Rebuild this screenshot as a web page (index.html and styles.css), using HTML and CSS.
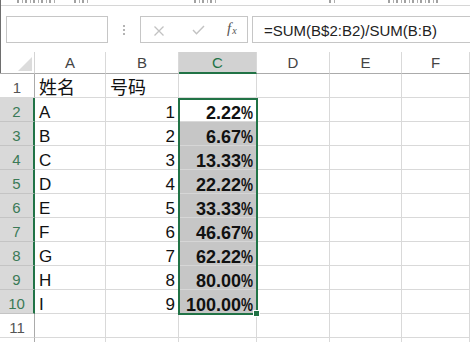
FILE: index.html
```html
<!DOCTYPE html>
<html lang="zh-CN">
<head>
<meta charset="utf-8">
<title>Sheet</title>
<link rel="stylesheet" href="styles.css">
</head>
<body>
<div class="top">
  <div class="ribbon">
    <span class="frag f1"></span>
    <span class="frag f2"></span>
    <span class="frag f3"></span>
    <span class="frag f4"></span>
    <span class="frag f5"></span>
  </div>
  <div class="fbar">
    <div class="namebox"></div>
    <div class="grip"><i></i><i></i><i></i></div>
    <div class="fbtns">
      <svg class="ico x" width="12" height="10" viewBox="0 0 12 10"><path d="M1.5 0.5 L10.5 9.5 M10.5 0.5 L1.5 9.5" stroke="#c2c2c2" stroke-width="1.3" fill="none"/></svg>
      <svg class="ico ok" width="13" height="10" viewBox="0 0 13 10"><path d="M1 5 L4.5 8.8 L12 1" stroke="#c2c2c2" stroke-width="1.4" fill="none"/></svg>
      <span class="fx">f<sub>x</sub></span>
    </div>
    <div class="finput">=SUM(B$2:B2)/SUM(B:B)</div>
  </div>
</div>
<div class="sheet">
  <div class="corner"><svg width="16" height="16" viewBox="0 0 16 16"><polygon points="15,1 15,15 1,15" fill="#dcdcdc"/></svg></div>
  <div class="hc">A</div><div class="hc">B</div><div class="hc sel">C</div><div class="hc">D</div><div class="hc">E</div><div class="hc">F</div>

  <div class="rh">1</div><div class="c cjk">姓名</div><div class="c cjk">号码</div><div class="c"></div><div class="c"></div><div class="c"></div><div class="c"></div>

  <div class="rh sel">2</div><div class="c">A</div><div class="c r">1</div><div class="c r pct">2.22<i>%</i></div><div class="c"></div><div class="c"></div><div class="c"></div>
  <div class="rh sel">3</div><div class="c">B</div><div class="c r">2</div><div class="c r pct fill">6.67<i>%</i></div><div class="c"></div><div class="c"></div><div class="c"></div>
  <div class="rh sel">4</div><div class="c">C</div><div class="c r">3</div><div class="c r pct fill">13.33<i>%</i></div><div class="c"></div><div class="c"></div><div class="c"></div>
  <div class="rh sel">5</div><div class="c">D</div><div class="c r">4</div><div class="c r pct fill">22.22<i>%</i></div><div class="c"></div><div class="c"></div><div class="c"></div>
  <div class="rh sel">6</div><div class="c">E</div><div class="c r">5</div><div class="c r pct fill">33.33<i>%</i></div><div class="c"></div><div class="c"></div><div class="c"></div>
  <div class="rh sel">7</div><div class="c">F</div><div class="c r">6</div><div class="c r pct fill">46.67<i>%</i></div><div class="c"></div><div class="c"></div><div class="c"></div>
  <div class="rh sel">8</div><div class="c">G</div><div class="c r">7</div><div class="c r pct fill">62.22<i>%</i></div><div class="c"></div><div class="c"></div><div class="c"></div>
  <div class="rh sel">9</div><div class="c">H</div><div class="c r">8</div><div class="c r pct fill">80.00<i>%</i></div><div class="c"></div><div class="c"></div><div class="c"></div>
  <div class="rh sel">10</div><div class="c">I</div><div class="c r">9</div><div class="c r pct fill">100.00<i>%</i></div><div class="c"></div><div class="c"></div><div class="c"></div>

  <div class="rh">11</div><div class="c"></div><div class="c"></div><div class="c"></div><div class="c"></div><div class="c"></div><div class="c"></div>
  <div class="rh"></div><div class="c"></div><div class="c"></div><div class="c"></div><div class="c"></div><div class="c"></div><div class="c"></div>

  <div class="selbox"><span class="handle"></span></div>
</div>
</body>
</html>
```
FILE: styles.css
```css
* { box-sizing: border-box; }
html, body { margin: 0; padding: 0; background: #fff; }
body {
  width: 470px;
  height: 342px;
  overflow: hidden;
  font-family: "Liberation Sans", Arial, sans-serif;
  color: #111;
}

.top { border-left: 1px solid #6e6e6e; }

.ribbon {
  height: 6px;
  border-bottom: 1px solid #d6d6d6;
  display: flex;
  align-items: flex-start;
  overflow: hidden;
}
.frag {
  display: block;
  height: 3px;
  background: repeating-linear-gradient(90deg, #8a8a8a 0 2px, transparent 2px 5px, #9a9a9a 5px 6px, transparent 6px 8px);
  opacity: 0.8;
}
.f1 { margin-left: 16px; width: 39px; }
.f2 { margin-left: 18px; width: 14px; }
.f3 { margin-left: 106px; width: 22px; }
.f4 { margin-left: 113px; width: 6px; }
.f5 { margin-left: 53px; width: 50px; }

.fbar {
  display: flex;
  align-items: center;
  height: 46px;
  padding: 10px 0 9px 5px;
}
.namebox {
  width: 102px;
  height: 27px;
  border: 1px solid #c6c6c6;
}
.grip {
  width: 32px;
  display: flex;
  flex-direction: column;
  align-items: center;
  gap: 2px;
}
.grip i {
  display: block;
  width: 2px;
  height: 2px;
  background: #b4b4b4;
}
.fbtns {
  width: 108px;
  height: 27px;
  border: 1px solid #c6c6c6;
  display: flex;
  align-items: center;
  padding-left: 12px;
}
.ico { display: block; }
.ico.x { margin-top: 2px; }
.ico.ok { margin-left: 27px; margin-top: 1px; }
.fx {
  margin-left: 22px;
  font-family: "Liberation Serif", "Times New Roman", serif;
  font-style: italic;
  font-size: 15px;
  color: #555;
  line-height: 14px;
}
.fx sub { font-size: 10px; vertical-align: -1px; margin-left: 1px; }
.finput {
  flex: 1;
  margin-left: 4px;
  height: 27px;
  border: 1px solid #c6c6c6;
  border-right: none;
  padding: 1px 0 0 11px;
  font-size: 15px;
  line-height: 25px;
  color: #222;
  white-space: nowrap;
}

.sheet {
  position: relative;
  display: grid;
  grid-template-columns: 35px 71px 73px 78px 73px 72px 68px;
  grid-template-rows: 22px repeat(12, 24px);
}
.corner {
  box-shadow: inset 1px 0 0 #6e6e6e;
  border-right: 1px solid #d4d4d4;
  border-bottom: 1px solid #ababab;
  padding: 4px 0 0 17px;
}
.corner svg { display: block; }

.hc {
  font-size: 15px;
  line-height: 22px;
  text-align: center;
  color: #444;
  border-right: 1px solid #d9d9d9;
  border-bottom: 1px solid #ababab;
}
.hc.sel {
  background: #d2d2d2;
  color: #217346;
  border-bottom: 2px solid #217346;
  line-height: 21px;
}

.rh {
  font-size: 15px;
  line-height: 20px;
  padding-top: 4px;
  text-align: center;
  color: #555;
  border-right: 1px solid #ababab;
  border-bottom: 1px solid #d9d9d9;
}
.rh.sel {
  background: #d9d9d9;
  color: #3b7a57;
  border-right: 2px solid #217346;
  border-bottom-color: #c4c4c4;
}

.c {
  border-right: 1px solid #d9d9d9;
  border-bottom: 1px solid #d9d9d9;
  font-size: 17px;
  line-height: 20px;
  padding: 5px 3px 0 4px;
  white-space: nowrap;
  overflow: hidden;
  color: #111;
}
.c.r { text-align: right; padding-right: 3px; }
.c.cjk {
  font-family: "Noto Sans CJK SC", "Liberation Sans", sans-serif;
  font-size: 18px;
  padding-top: 2px;
}
.c.fill { background: #c6c6c6; border-bottom-color: #d6d6d6; }
.c.pct { font-weight: bold; font-size: 18px; }
.c.pct i {
  font-style: normal;
  display: inline-block;
  transform: scaleX(0.75);
  transform-origin: right center;
  margin-left: -4px;
}

.selbox {
  position: absolute;
  grid-column: 4 / 5;
  grid-row: 3 / 12;
  top: 0;
  left: -1px;
  right: -1px;
  bottom: -1px;
  border: 2px solid #217346;
  pointer-events: none;
}
.handle {
  position: absolute;
  right: -4px;
  bottom: -4px;
  width: 7px;
  height: 7px;
  background: #217346;
  border: 1px solid #fff;
}
```
